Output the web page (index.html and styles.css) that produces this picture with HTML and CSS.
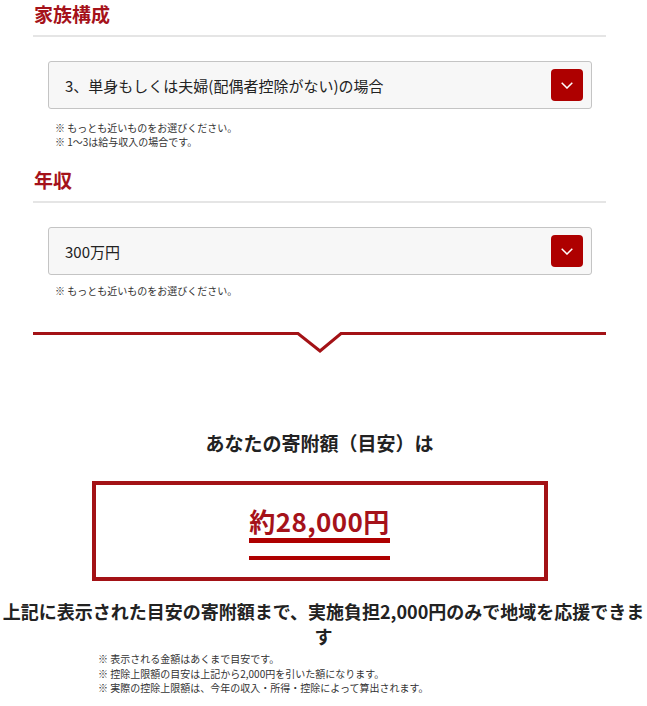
FILE: index.html
```html
<!DOCTYPE html>
<html lang="ja">
<head>
<meta charset="utf-8">
<title>寄附額シミュレーション</title>
<link rel="stylesheet" href="styles.css">
</head>
<body>
<main class="calc">
  <section class="field">
    <h2 class="field-title">家族構成</h2>
    <div class="select">
      <span class="select-value">3、単身もしくは夫婦(配偶者控除がない)の場合</span>
      <span class="select-btn"><svg width="12" height="7" viewBox="0 0 12 7"><polyline points="0.7,0.7 6,6 11.3,0.7" fill="none" stroke="#fff" stroke-width="1.5"/></svg></span>
    </div>
    <ul class="notes notes-first">
      <li>※ もっとも近いものをお選びください。</li>
      <li>※ 1～3は給与収入の場合です。</li>
    </ul>
  </section>
  <section class="field field-second">
    <h2 class="field-title">年収</h2>
    <div class="select">
      <span class="select-value">300万円</span>
      <span class="select-btn"><svg width="12" height="7" viewBox="0 0 12 7"><polyline points="0.7,0.7 6,6 11.3,0.7" fill="none" stroke="#fff" stroke-width="1.5"/></svg></span>
    </div>
    <ul class="notes">
      <li>※ もっとも近いものをお選びください。</li>
    </ul>
  </section>
  <div class="divider">
    <svg width="573" height="21" viewBox="0 0 573 21"><polyline points="0,1.5 265,1.5 287,19 308,1.5 573,1.5" fill="none" stroke="#a31216" stroke-width="3"/></svg>
  </div>
  <section class="result">
    <h3 class="result-title">あなたの寄附額（目安）は</h3>
    <div class="result-box">
      <span class="amount">約28,000円</span>
    </div>
    <p class="result-lead">上記に表示された目安の寄附額まで、実施負担2,000円のみで地域を応援できます</p>
    <ul class="result-notes">
      <li>※ 表示される金額はあくまで目安です。</li>
      <li>※ 控除上限額の目安は上記から2,000円を引いた額になります。</li>
      <li>※ 実際の控除上限額は、今年の収入・所得・控除によって算出されます。</li>
    </ul>
  </section>
</main>
</body>
</html>
```
FILE: styles.css
```css
* { box-sizing: border-box; }
html, body { margin: 0; padding: 0; background: #fff; }
body {
  font-family: "Noto Sans CJK JP", "Noto Sans", sans-serif;
  color: #222;
}
.calc {
  width: 573px;
  margin-left: 33px;
}
.field-title {
  margin: 0;
  height: 37px;
  font-size: 19px;
  line-height: 27px;
  font-weight: 700;
  color: #a5121a;
  padding: 0 0 8px 1px;
  border-bottom: 2px solid #e5e5e5;
}
.field-second { margin-top: 17px; }
.select {
  margin: 24px 14px 0 15px;
  height: 48px;
  border: 1px solid #c4c4c4;
  border-radius: 3px;
  background: #f7f7f7;
  display: flex;
  align-items: center;
  justify-content: space-between;
  padding: 0 8px 0 16px;
}
.select-value {
  font-size: 15px;
  color: #222;
}
.select-btn {
  width: 32px;
  height: 32px;
  border-radius: 4px;
  background: #ae0000;
  display: flex;
  align-items: center;
  justify-content: center;
}
.notes {
  list-style: none;
  margin: 9px 0 0 22px;
  padding: 0;
  font-size: 10px;
  line-height: 14px;
  color: #333;
}
.notes li { height: 14px; }
.notes-first { margin-top: 12px; }
.divider {
  margin-top: 34px;
  height: 21px;
}
.divider svg { display: block; }
.result { text-align: center; }
.result-title {
  margin: 76px 0 0;
  height: 28px;
  font-size: 19px;
  line-height: 28px;
  font-weight: 700;
  color: #222;
}
.result-box {
  width: 456px;
  height: 100px;
  margin: 24px auto 0;
  border: 4px solid #a31216;
  padding-top: 19px;
  display: flex;
  justify-content: center;
  align-items: flex-start;
}
.amount {
  display: block;
  font-size: 26px;
  line-height: 34px;
  font-weight: 700;
  letter-spacing: 0.4px;
  color: #a5121a;
}
.amount::after {
  content: "";
  display: block;
  height: 13px;
  border-top: 5px solid #ae0000;
  border-bottom: 4px solid #ae0000;
}
.result-lead {
  margin: 18px -41px 0 -33px;
  font-size: 18px;
  line-height: 25px;
  font-weight: 700;
  color: #222;
}
.result-notes {
  list-style: none;
  text-align: left;
  margin: 3px 0 0 65px;
  padding: 0;
  font-size: 10px;
  line-height: 14.5px;
  color: #333;
}
```
